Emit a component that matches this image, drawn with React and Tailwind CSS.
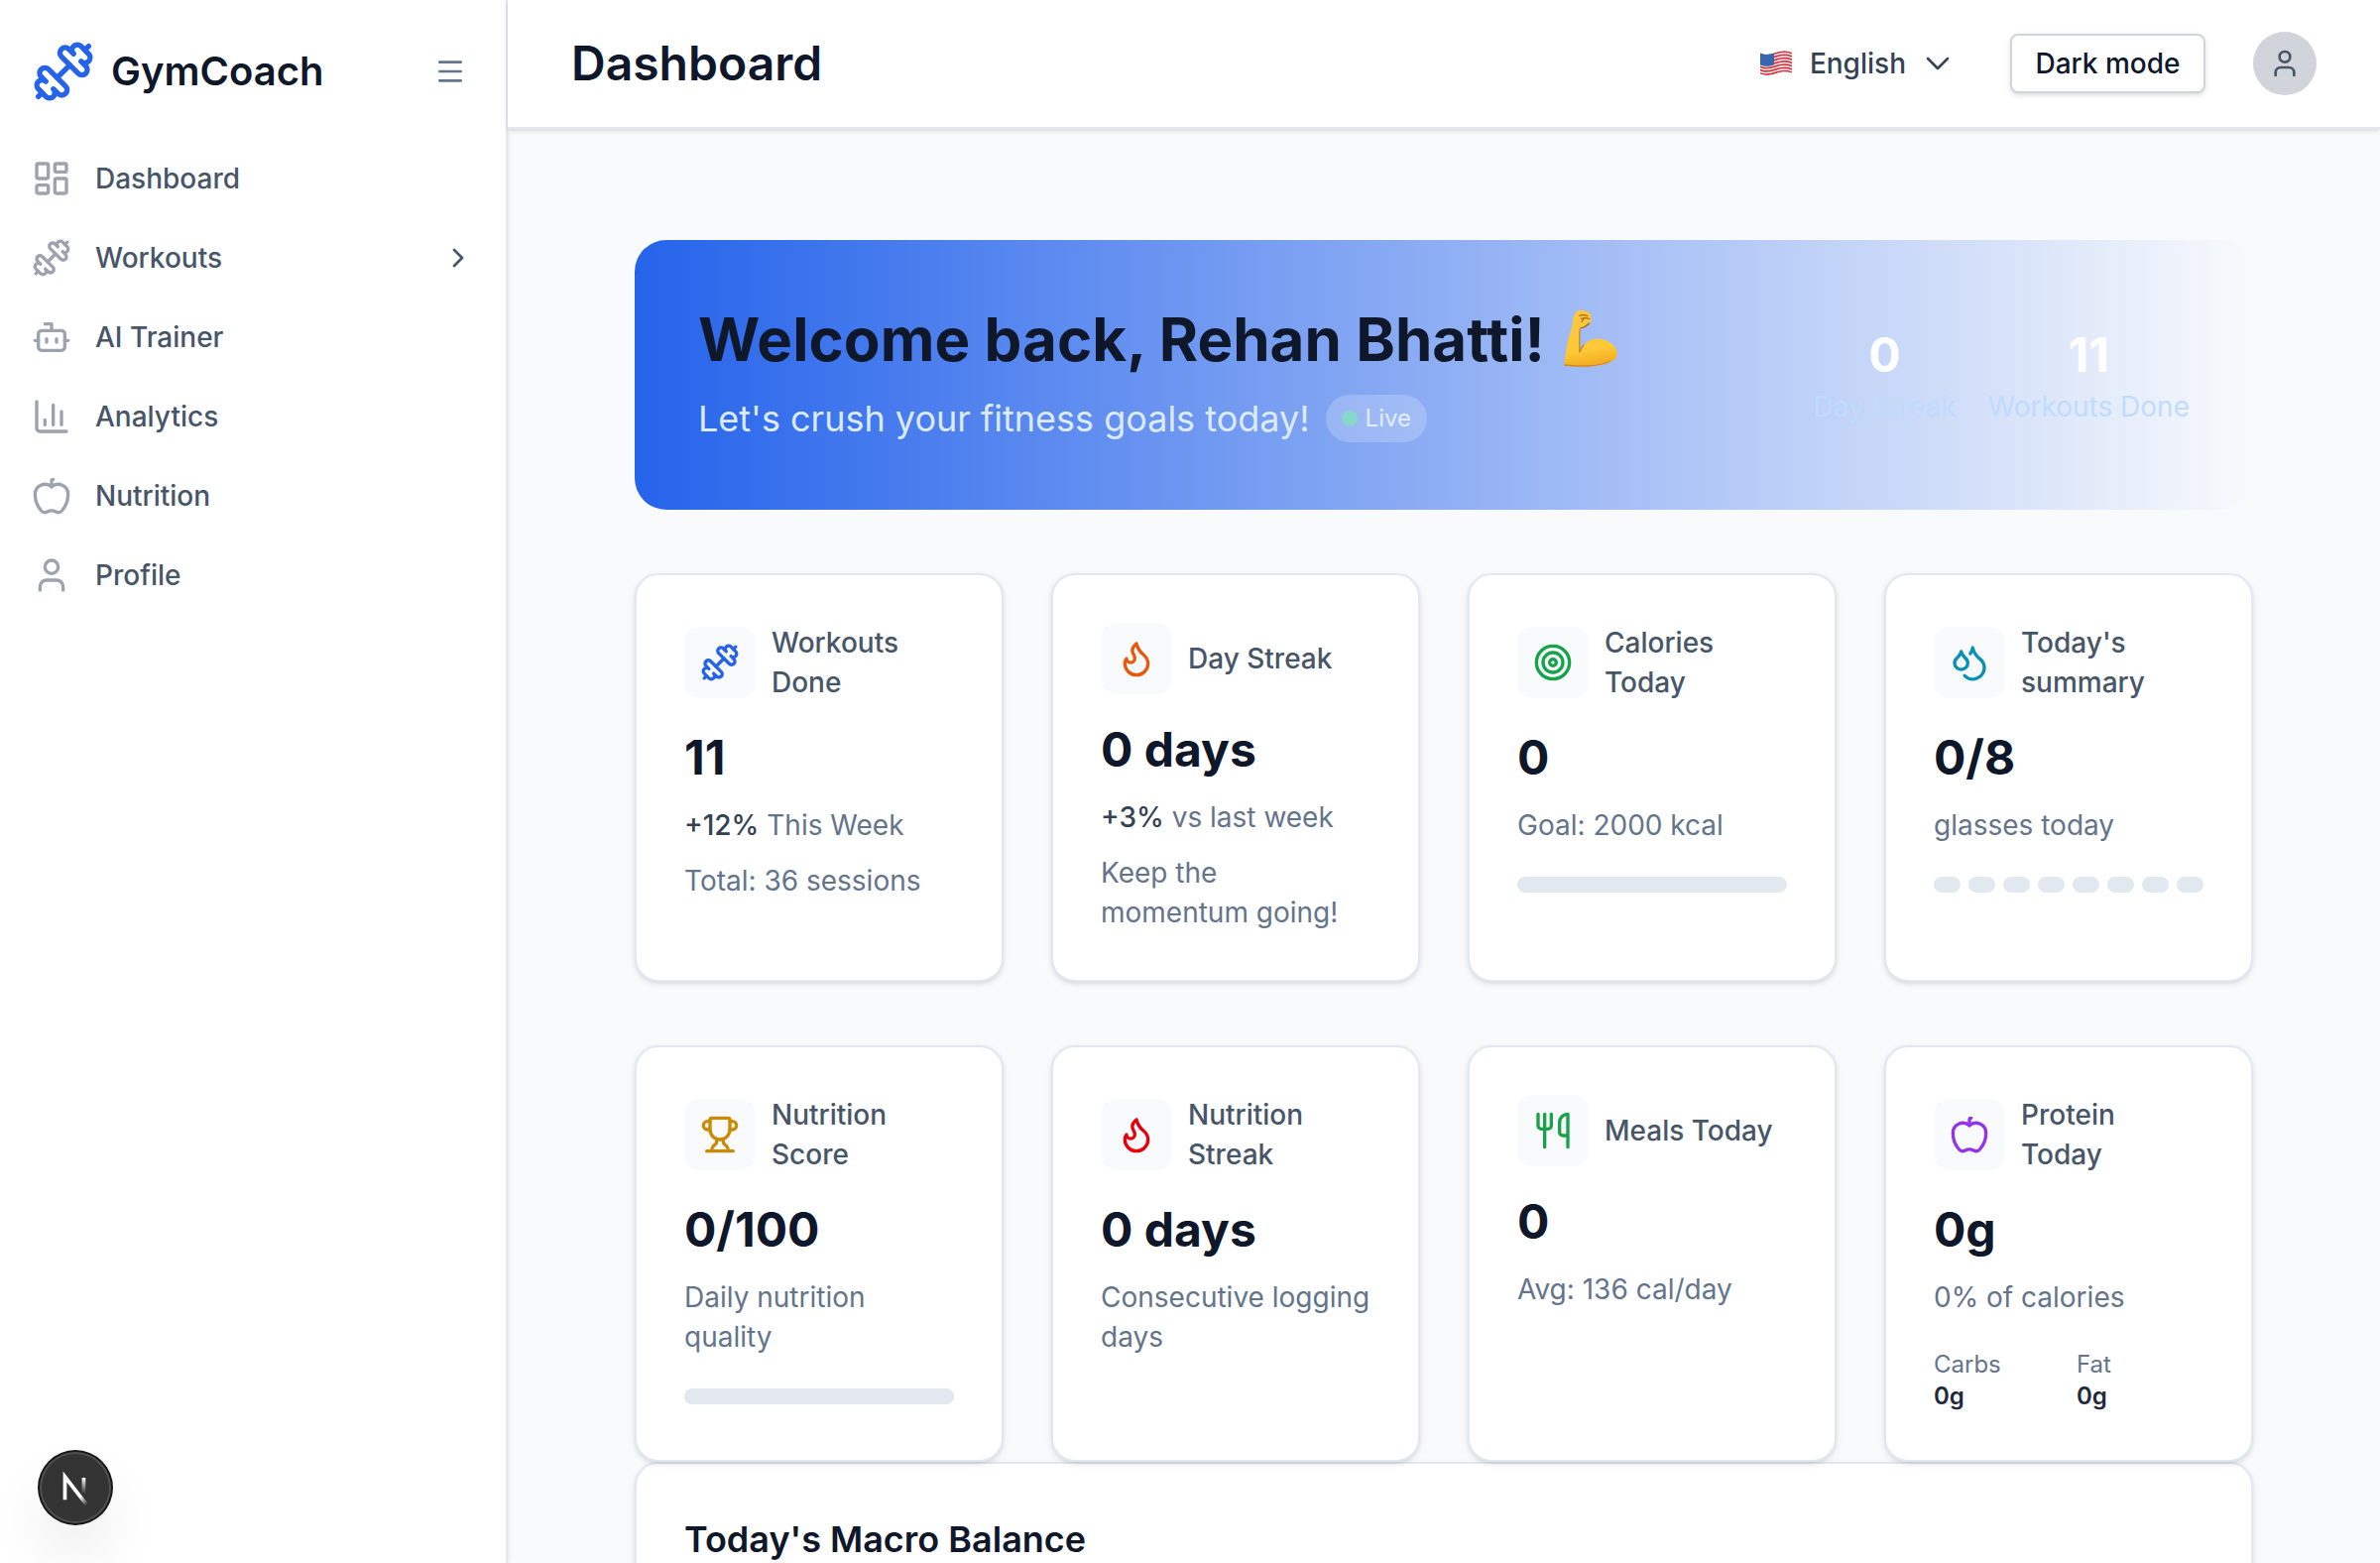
import React from "react";
import {
  Apple,
  Bot,
  ChartColumn,
  ChevronRight,
  Droplets,
  Dumbbell,
  Flame,
  LayoutDashboard,
  Menu,
  Target,
  Trophy,
  User,
  Utensils,
} from "lucide-react";

const navItems = [
  { label: "Dashboard", icon: LayoutDashboard },
  { label: "Workouts", icon: Dumbbell, expandable: true },
  { label: "AI Trainer", icon: Bot },
  { label: "Analytics", icon: ChartColumn },
  { label: "Nutrition", icon: Apple },
  { label: "Profile", icon: User },
];

function Sidebar() {
  return (
    <aside className="relative z-20 flex h-full w-[512px] shrink-0 flex-col border-r-2 border-[#e2e8f0] bg-white shadow-[0_2px_6px_rgba(0,0,0,0.1),0_2px_4px_-2px_rgba(0,0,0,0.1)]">
      <div className="flex h-36 items-center justify-between pl-8 pr-10">
        <div className="flex items-center gap-4">
          <Dumbbell className="size-16 text-[#2563eb]" />
          <span className="text-[40px] leading-14 font-semibold text-[#0f172a]">GymCoach</span>
        </div>
        <Menu className="size-8 text-[#64748b]" />
      </div>
      <nav className="flex flex-col gap-2">
        {navItems.map(({ label, icon: Icon, expandable }) => (
          <a key={label} className="flex h-18 items-center gap-6 pr-8 pl-8">
            <Icon className="size-10 text-[#9ca3af]" />
            <span className="flex-1 text-[28px] leading-10 font-medium text-[#475569]">{label}</span>
            {expandable && <ChevronRight className="size-8 text-[#475569]" />}
          </a>
        ))}
      </nav>
    </aside>
  );
}

function Flag() {
  return (
    <svg viewBox="0 0 32 26" className="h-[26px] w-8">
      <defs>
        <clipPath id="flagShape">
          <path d="M0 2.500C5 5 10 4 16 1.800 22-.2 27-.2 32 1.800V22.600C27 20.800 22 21 16 23.200 10 25.400 5 25.600 0 23.600Z" />
        </clipPath>
      </defs>
      <g clipPath="url(#flagShape)">
        <rect width="32" height="26" fill="#f4f1f1" />
        {[0, 1, 2, 3, 4, 5, 6].map((i) => (
          <path
            key={i}
            d="M0 3.300C5 5.800 10 4.800 16 2.600 22 .6 27 .6 32 2.600"
            transform={"translate(0 " + i * 3.25 + ")"}
            fill="none"
            stroke="#d8343f"
            strokeWidth="1.700"
          />
        ))}
        <path d="M0 0H14V14.200C9 16.200 5 16.400 0 14.600Z" fill="#3467ad" />
      </g>
    </svg>
  );
}

function Header() {
  return (
    <header className="relative z-30 flex h-[130px] shrink-0 items-center justify-between border-b-2 border-[#e2e8f0] bg-white px-16 shadow-[0_2px_6px_rgba(0,0,0,0.1),0_2px_4px_-2px_rgba(0,0,0,0.1)]">
      <h1 className="text-5xl leading-16 font-semibold text-[#0f172a]">Dashboard</h1>
      <div className="flex items-center gap-12">
        <div className="flex items-center pr-[9px]">
          <Flag />
          <span className="ml-[18px] text-[28px] leading-10 font-medium text-[#334155]">English</span>
          <svg viewBox="0 0 24 24" className="ml-4 size-8 text-[#334155]" fill="none" stroke="currentColor" strokeWidth="1.900" strokeLinecap="round" strokeLinejoin="round">
            <path d="m19.500 8.250-7.500 7.500-7.500-7.500" />
          </svg>
        </div>
        <button className="h-15 w-[197px] rounded-lg border-2 border-[#d1d5db] bg-white text-[28px] leading-10 font-medium whitespace-nowrap text-[#0f172a] shadow-[0_2px_6px_rgba(0,0,0,0.1),0_2px_4px_-2px_rgba(0,0,0,0.1)]">
          Dark mode
        </button>
        <div className="flex size-16 items-center justify-center rounded-full bg-[#d1d5db]">
          <User className="size-8 text-[#475569]" />
        </div>
      </div>
    </header>
  );
}

function Biceps() {
  return (
    <svg viewBox="0 0 56 60" className="h-[60px] w-14">
      <defs>
        <linearGradient id="armSkin" x1="0" y1="0" x2="0.15" y2="1">
          <stop offset="0" stopColor="#fdc640" />
          <stop offset="0.75" stopColor="#fec937" />
          <stop offset="1" stopColor="#f5ae26" />
        </linearGradient>
      </defs>
      <path
        d="M10 7C11 3 14 .5 17 1 21 .8 25 2.500 27 4.500 28 6 26.500 7.500 27.500 9 28.500 11 27 13 25 14.500 22 17.500 19 19 16.500 19.500 15.500 26 16 34 16 43 19 36 24 30 33 29.500 44 29.500 54 37 54 45 53.500 52 42 57 24 57.500 14 57.800 5 57.500 .8 56 0 53 1.500 47 2.500 40 3.500 33 6 23 8.500 18 8.500 14 9 10 10 7Z"
        fill="url(#armSkin)"
      />
      <path d="M1 56C14 57.800 34 58 46 52.500" fill="none" stroke="#cf861d" strokeWidth="1.300" strokeLinecap="round" />
      <path d="M16 20.500C15.500 28 16 36 15.800 43.500 17 40 18.500 37.500 20 36" fill="none" stroke="#c9821c" strokeWidth="1.200" strokeLinecap="round" />
      <path d="M16 6.500C18 5 21 5.500 24 6.500M17.500 9.500C20 8 23 8.500 26 9.500M18 12.500 20 9.500M16.500 19C20 18.500 23 16.500 25.500 14" fill="none" stroke="#a8691c" strokeWidth="1.200" strokeLinecap="round" />
    </svg>
  );
}

function BannerStat({ value, label }) {
  return (
    <div className="text-center">
      <div className="text-5xl leading-16 font-bold text-white">{value}</div>
      <div className="text-[28px] leading-10 text-[#bfdbfe]">{label}</div>
    </div>
  );
}

function Banner() {
  return (
    <section className="flex items-center justify-between rounded-[32px] bg-[linear-gradient(to_right,#2563eb,rgba(37,99,235,0))] p-16">
      <div>
        <h2 className="flex items-center gap-[19px] text-[60px] leading-18 font-bold tracking-[0.06px] text-[#0f172a]">
          Welcome back, Rehan Bhatti!
          <Biceps />
        </h2>
        <div className="mt-4 flex h-14 items-center gap-4">
          <p className="text-4xl leading-14 text-[#dbeafe]">Let's crush your fitness goals today!</p>
          <span className="flex h-12 items-center gap-2 rounded-full bg-white/20 px-4 text-2xl leading-8 text-[#e3edfd]">
            <span className="size-4 rounded-full bg-[#86d9c8]" />
            Live
          </span>
        </div>
      </div>
      <div className="flex items-center gap-8">
        <BannerStat value="0" label="Day Streak" />
        <BannerStat value="11" label="Workouts Done" />
      </div>
    </section>
  );
}

function StatCard({ icon: Icon, tint, title, value, children }) {
  return (
    <article className="rounded-3xl border-2 border-[#e2e8f0] bg-white p-12 shadow-[0_2px_6px_rgba(0,0,0,0.1),0_2px_4px_-2px_rgba(0,0,0,0.1)]">
      <div className="flex items-center gap-4">
        <div className="flex size-18 shrink-0 items-center justify-center rounded-2xl bg-[#f8fafc]">
          <Icon className={"size-10 " + tint} />
        </div>
        <h3 className="text-[28px] leading-10 font-medium text-[#475569]">{title}</h3>
      </div>
      <div className="mt-6 text-5xl leading-16 font-bold text-[#0f172a]">{value}</div>
      <div className="mt-4 flex flex-col gap-4 text-[28px] leading-10 text-[#64748b]">{children}</div>
    </article>
  );
}

function Progress() {
  return <div className="mt-4 h-4 rounded-full bg-[#e2e8f0]" />;
}

function Glasses() {
  return (
    <div className="mt-4 flex gap-2">
      {Array.from({ length: 8 }, (_, i) => (
        <div key={i} className="h-4 flex-1 rounded-full bg-[#e2e8f0]" />
      ))}
    </div>
  );
}

function Macro({ name, amount }) {
  return (
    <div>
      <div>{name}</div>
      <div className="font-semibold text-[#1e293b]">{amount}</div>
    </div>
  );
}

function DevBadge() {
  return (
    <div className="absolute bottom-10 left-10 z-30 size-18 rounded-full bg-[#333333] shadow-[0_0_0_2px_#171717,inset_0_0_0_2px_rgba(255,255,255,0.14),0_32px_64px_-16px_rgba(0,0,0,0.24)]">
      <svg viewBox="-1.9 1.5 36 36" className="size-18" fill="none">
        <defs>
          <linearGradient id="diagonalFade" x1="9.956" y1="11.123" x2="15.478" y2="17.967" gradientUnits="userSpaceOnUse">
            <stop stopColor="white" />
            <stop offset="0.604" stopColor="white" stopOpacity="0" />
            <stop offset="1" stopColor="white" stopOpacity="0" />
          </linearGradient>
          <linearGradient id="stemFade" x1="11.822" y1="1.400" x2="11.793" y2="9.625" gradientUnits="userSpaceOnUse">
            <stop stopColor="white" />
            <stop offset="1" stopColor="white" stopOpacity="0" />
          </linearGradient>
        </defs>
        <g transform="translate(8.5 13)" strokeWidth="1.860">
          <path d="M13.300 15.200 2.340 1V12.600" stroke="url(#diagonalFade)" />
          <path d="M11.825 1.500V13.100" stroke="url(#stemFade)" />
        </g>
      </svg>
    </div>
  );
}

export default function App() {
  return (
    <div className="relative flex h-[1576px] w-[2400px] overflow-hidden bg-[#f8fafc] font-['Inter',sans-serif]">
      <Sidebar />
      <div className="flex min-w-0 flex-1 flex-col">
        <Header />
        <main className="min-h-0 flex-1 overflow-hidden px-32 pt-28">
          <Banner />
          <div className="mt-16 grid grid-cols-4 gap-x-12 gap-y-16">
            <StatCard icon={Dumbbell} tint="text-[#2563eb]" title="Workouts Done" value="11">
              <p><span className="font-medium text-[#334155]">+12%</span> This Week</p>
              <p>Total: 36 sessions</p>
            </StatCard>
            <StatCard icon={Flame} tint="text-[#ea580c]" title="Day Streak" value="0 days">
              <p><span className="font-medium text-[#334155]">+3%</span> vs last week</p>
              <p>Keep the momentum going!</p>
            </StatCard>
            <StatCard icon={Target} tint="text-[#16a34a]" title="Calories Today" value="0">
              <p>Goal: 2000 kcal</p>
              <Progress />
            </StatCard>
            <StatCard icon={Droplets} tint="text-[#0891b2]" title="Today's summary" value="0/8">
              <p>glasses today</p>
              <Glasses />
            </StatCard>
            <StatCard icon={Trophy} tint="text-[#ca8a04]" title="Nutrition Score" value="0/100">
              <p>Daily nutrition quality</p>
              <Progress />
            </StatCard>
            <StatCard icon={Flame} tint="text-[#e7000b]" title="Nutrition Streak" value="0 days">
              <p>Consecutive logging days</p>
            </StatCard>
            <StatCard icon={Utensils} tint="text-[#16a34a]" title="Meals Today" value="0">
              <p>Avg: 136 cal/day</p>
            </StatCard>
            <StatCard icon={Apple} tint="text-[#9333ea]" title="Protein Today" value="0g">
              <p>0% of calories</p>
              <div className="mt-4 grid grid-cols-2 gap-4 text-2xl leading-8">
                <Macro name="Carbs" amount="0g" />
                <Macro name="Fat" amount="0g" />
              </div>
            </StatCard>
          </div>
          <section className="h-[400px] rounded-3xl border-2 border-[#e2e8f0] bg-white p-12 shadow-[0_2px_6px_rgba(0,0,0,0.1),0_2px_4px_-2px_rgba(0,0,0,0.1)]">
            <h2 className="text-4xl leading-14 font-semibold text-[#0f172a]">Today's Macro Balance</h2>
          </section>
        </main>
      </div>
      <DevBadge />
    </div>
  );
}
